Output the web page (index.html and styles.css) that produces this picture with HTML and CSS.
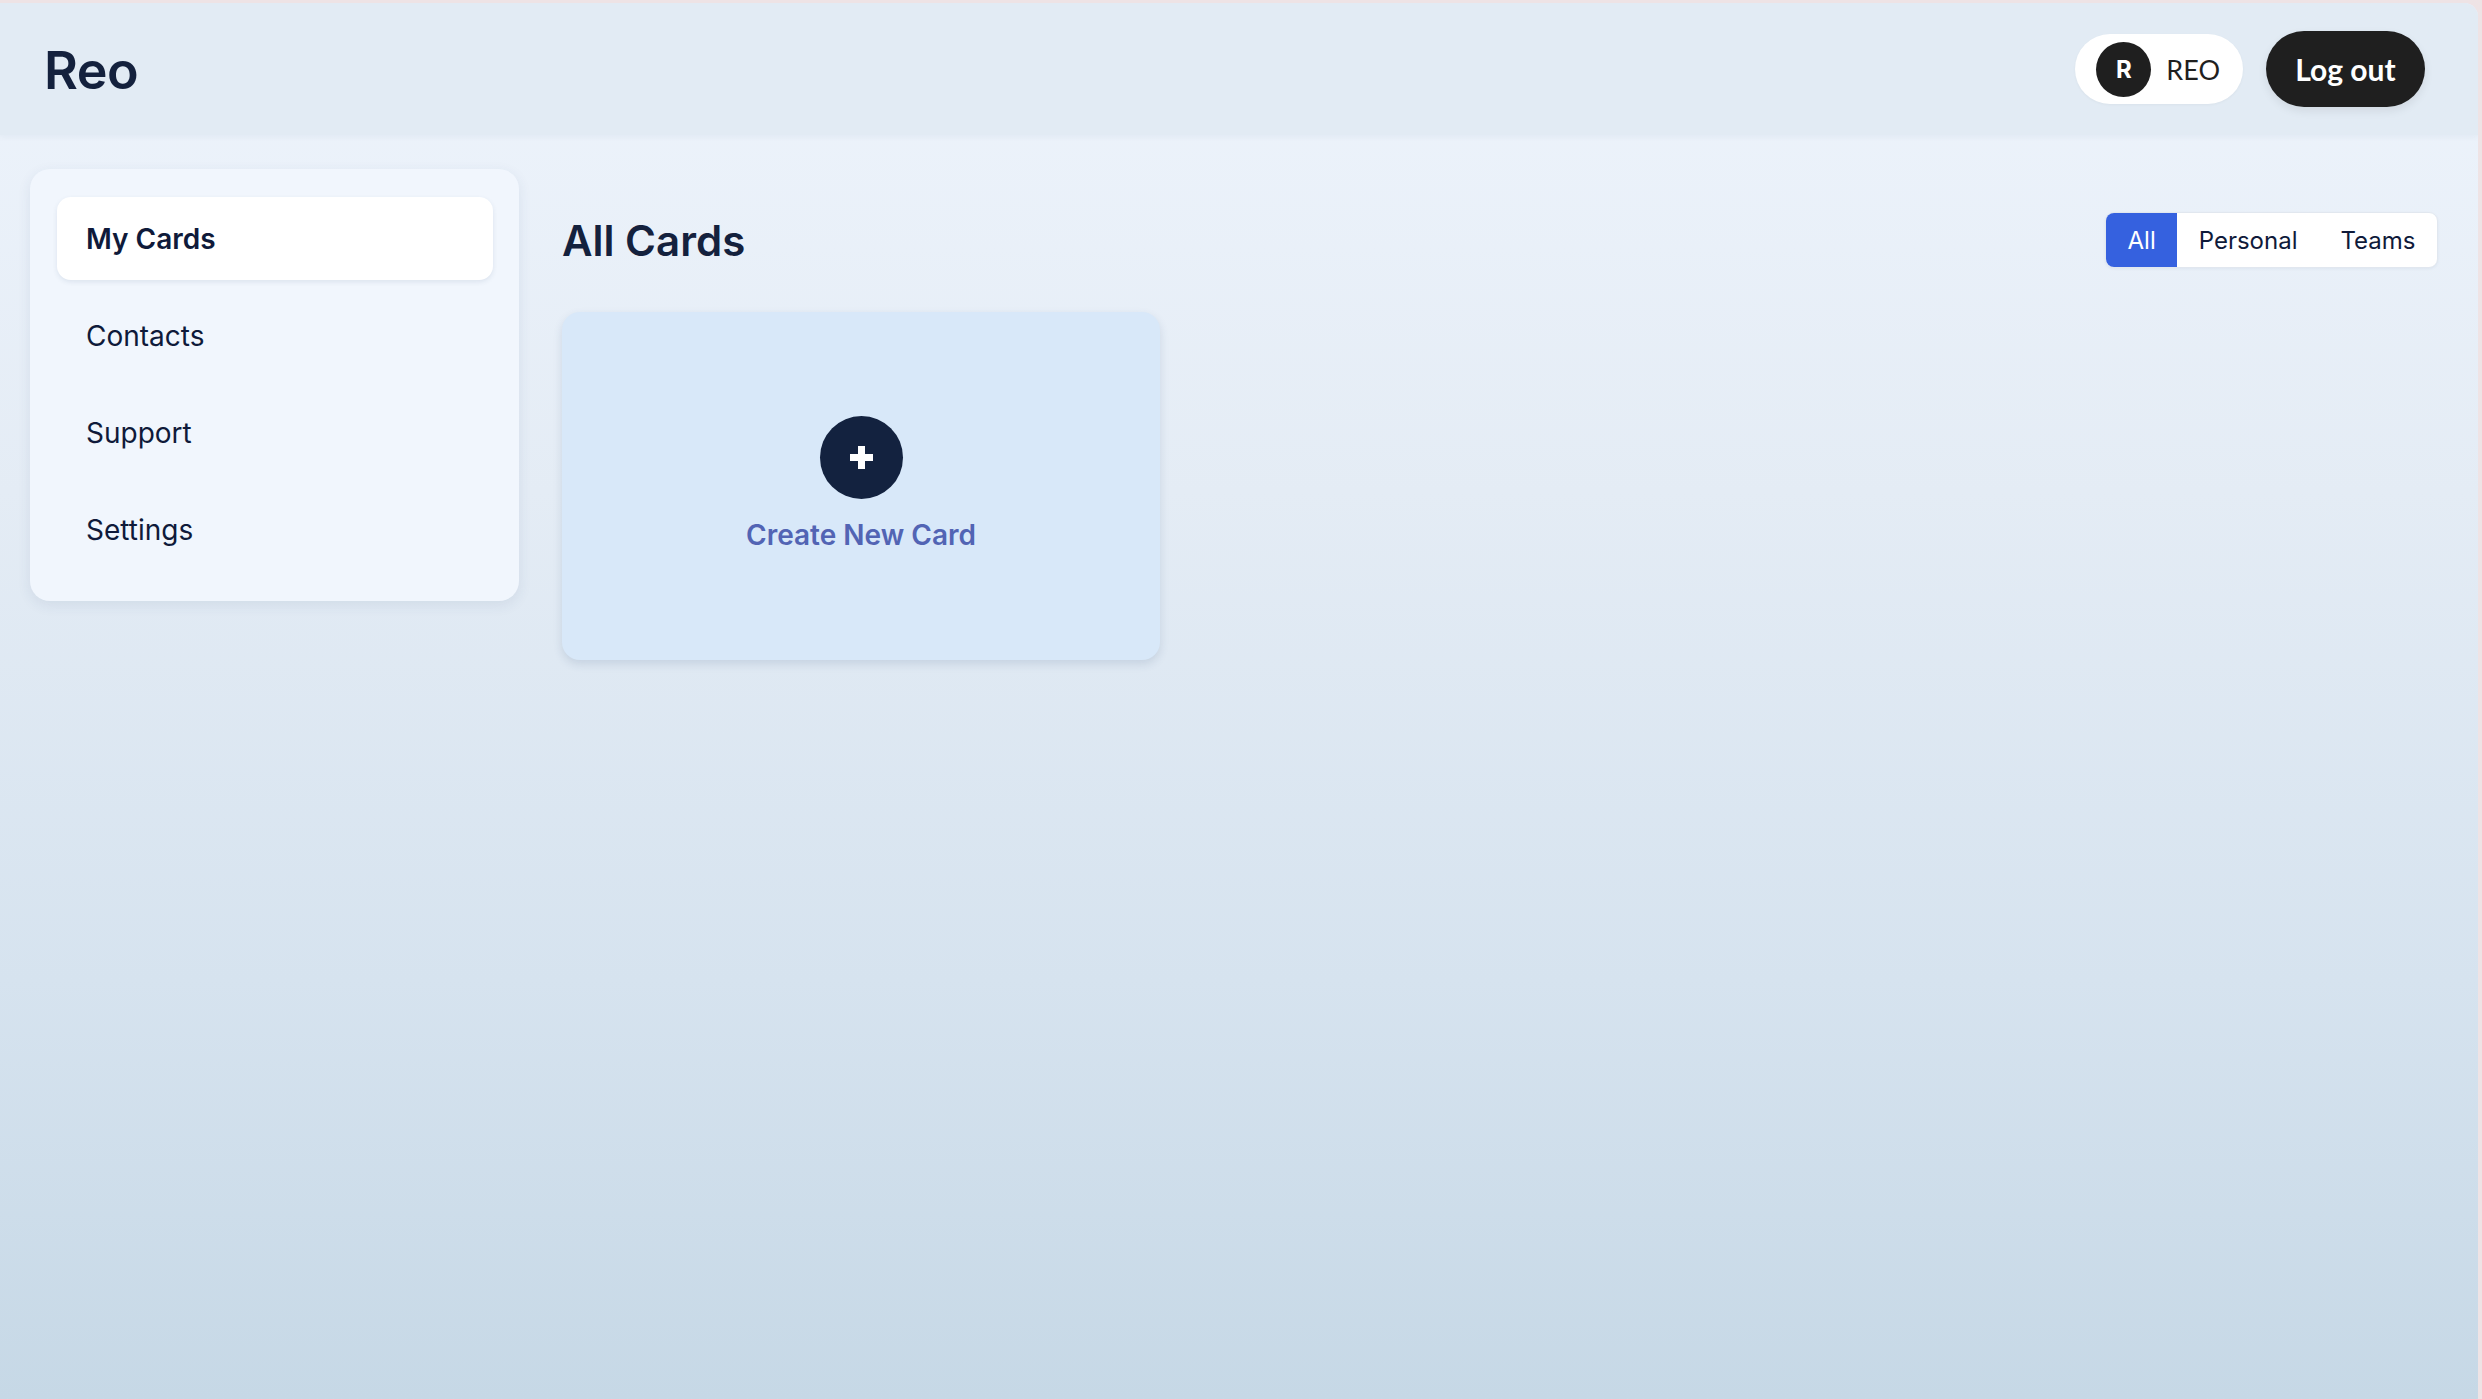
FILE: index.html
```html
<!DOCTYPE html>
<html lang="en">
<head>
<meta charset="utf-8">
<title>Reo – My Cards</title>
<link rel="stylesheet" href="styles.css">
</head>
<body>
<div class="app">
  <header class="topbar">
    <div class="logo">Reo</div>
    <div class="top-actions">
      <div class="user-pill">
        <span class="avatar">R</span>
        <span class="user-name">REO</span>
      </div>
      <button class="logout">Log out</button>
    </div>
  </header>
  <div class="layout">
    <nav class="sidebar">
      <a class="nav-item active">My Cards</a>
      <a class="nav-item">Contacts</a>
      <a class="nav-item">Support</a>
      <a class="nav-item">Settings</a>
    </nav>
    <main class="main">
      <div class="main-head">
        <h1 class="title">All Cards</h1>
        <div class="filter">
          <span class="seg active">All</span>
          <span class="seg">Personal</span>
          <span class="seg">Teams</span>
        </div>
      </div>
      <div class="cards">
        <div class="new-card">
          <span class="plus-circle">
            <svg width="23" height="23" viewBox="0 0 23 23"><path d="M8 0h7v8h8v7h-8v8H8v-8H0V8h8z" fill="#ffffff"/></svg>
          </span>
          <span class="new-label">Create New Card</span>
        </div>
      </div>
    </main>
  </div>
</div>
</body>
</html>
```

FILE: styles.css
```css
* { box-sizing: border-box; }

html, body {
  margin: 0;
  padding: 0;
}

body {
  background: #eee3e5;
  font-family: "Inter", "Liberation Sans", sans-serif;
  color: #0f1a3a;
}

.app {
  margin: 3px 4px 0 0;
  min-height: 1396px;
  border-top-right-radius: 14px;
  overflow: hidden;
  background: linear-gradient(180deg, #eef4fc 0%, #e4ecf5 35%, #d6e3ef 70%, #c6d8e6 100%);
}

.topbar {
  height: 132px;
  padding: 0 53px 0 44px;
  display: flex;
  align-items: center;
  justify-content: space-between;
  background: #e2ebf4;
  box-shadow: 0 2px 6px rgba(40, 70, 110, 0.05);
  position: relative;
}

.logo {
  font-size: 52px;
  font-weight: 600;
  color: #14213d;
  letter-spacing: -0.5px;
  margin-top: 2px;
}

.top-actions {
  display: flex;
  align-items: center;
  gap: 23px;
}

.user-pill {
  display: flex;
  align-items: center;
  gap: 15px;
  height: 70px;
  padding: 0 23px 0 21px;
  background: #ffffff;
  border-radius: 35px;
  box-shadow: 0 1px 3px rgba(0, 0, 0, 0.04);
}

.avatar {
  width: 55px;
  height: 55px;
  border-radius: 50%;
  background: #1f1f1f;
  color: #ffffff;
  display: flex;
  align-items: center;
  justify-content: center;
  font-family: "Inter", sans-serif;
  font-weight: 700;
  font-size: 24px;
}

.user-name {
  font-family: "Lato", "Liberation Sans", sans-serif;
  font-size: 27px;
  color: #1f1f1f;
}

.logout {
  height: 76px;
  width: 159px;
  border: none;
  border-radius: 38px;
  background: #1f1f1f;
  color: #ffffff;
  font-family: "Lato", "Liberation Sans", sans-serif;
  font-weight: 700;
  font-size: 30px;
  box-shadow: 0 4px 10px rgba(0, 0, 0, 0.08);
  padding: 0;
}

.layout {
  display: flex;
  align-items: flex-start;
  gap: 43px;
  padding: 34px 40px 0 30px;
}

.sidebar {
  width: 489px;
  flex: none;
  padding: 28px 26px 30px 27px;
  background: #f1f6fd;
  border-radius: 20px;
  box-shadow: 0 4px 14px rgba(40, 70, 110, 0.09);
  display: flex;
  flex-direction: column;
  gap: 14px;
}

.nav-item {
  height: 83px;
  padding: 0 29px;
  display: flex;
  align-items: center;
  font-size: 28px;
  color: #0f1a3a;
  border-radius: 14px;
}

.nav-item.active {
  background: #ffffff;
  font-weight: 600;
  box-shadow: 0 2px 5px rgba(40, 70, 110, 0.10);
}

.main {
  flex: 1;
  min-width: 0;
}

.main-head {
  display: flex;
  align-items: center;
  justify-content: space-between;
  margin-top: 43px;
  height: 56px;
}

.title {
  margin: 0;
  font-size: 42px;
  font-weight: 600;
  color: #14213d;
}

.filter {
  display: flex;
  height: 56px;
  background: #ffffff;
  border: 1px solid #e1e7ef;
  border-radius: 9px;
  overflow: hidden;
  box-shadow: 0 1px 3px rgba(40, 70, 110, 0.06);
}

.seg {
  display: flex;
  align-items: center;
  padding: 0 21.5px;
  font-size: 24px;
  color: #0f1a3a;
}

.seg.active {
  background: #3561df;
  color: #ffffff;
}

.cards {
  margin-top: 44px;
  display: flex;
}

.new-card {
  width: 598px;
  height: 348px;
  background: #d8e8f9;
  border-radius: 18px;
  box-shadow: 0 4px 10px rgba(40, 70, 110, 0.14);
  display: flex;
  flex-direction: column;
  align-items: center;
  justify-content: center;
  gap: 15px;
}

.plus-circle {
  width: 83px;
  height: 83px;
  border-radius: 50%;
  background: #13223f;
  display: flex;
  align-items: center;
  justify-content: center;
}

.new-label {
  font-size: 28px;
  line-height: 42px;
  font-weight: 600;
  color: #5264b4;
}
```
